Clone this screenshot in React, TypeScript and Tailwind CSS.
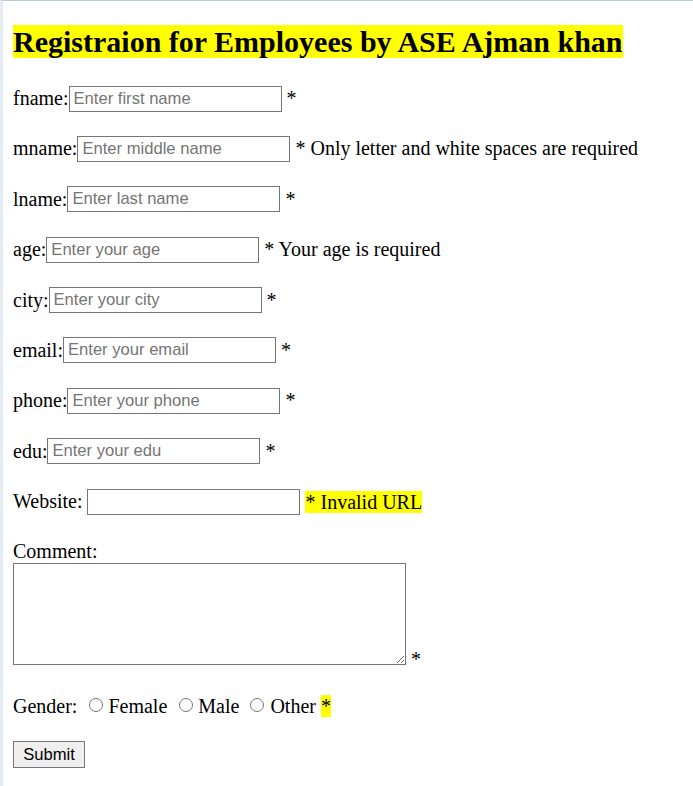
import React from "react";

const fields = [
  { label: "fname:", ph: "Enter first name", note: "*" },
  { label: "mname:", ph: "Enter middle name", note: "* Only letter and white spaces are required" },
  { label: "lname:", ph: "Enter last name", note: "*" },
  { label: "age:", ph: "Enter your age", note: "* Your age is required" },
  { label: "city:", ph: "Enter your city", note: "*" },
  { label: "email:", ph: "Enter your email", note: "*" },
  { label: "phone:", ph: "Enter your phone", note: "*" },
  { label: "edu:", ph: "Enter your edu", note: "*" },
];

const inputCls =
  "w-[213px] h-[26px] border border-[#767676] bg-white pl-[4px] text-[16.6px] text-black placeholder:text-[#757575] outline-none font-['Liberation_Sans',Arial,sans-serif]";

const radioCls =
  "appearance-none m-0 w-[14px] h-[14px] rounded-full border-[1.5px] border-[#767676] bg-white -translate-y-[1px] checked:border-[4px] checked:border-[#0075ff]";

export default function App() {
  return (
    <div className="min-h-screen bg-white border-t border-t-[#bcc8d4] border-l-[3px] border-l-[#e4edf6] text-black text-[20px] leading-[1.15] font-['Liberation_Serif','Times_New_Roman',serif]">
      <div className="pl-[10px] pt-[24px]">
        <h2 className="text-[30px] leading-[1.15] font-bold">
          <span className="bg-[#ffff00]">Registraion for Employees by ASE Ajman khan</span>
        </h2>

        <form className="mt-[26px]" onSubmit={(e) => e.preventDefault()}>
          <div className="flex flex-col gap-[24.4px]">
            {fields.map((f) => (
              <div key={f.label} className="flex items-center h-[26px]">
                <span>{f.label}</span>
                <input type="text" placeholder={f.ph} className={inputCls} />
                <span className="ml-[5px]">{f.note}</span>
              </div>
            ))}
            <div className="flex items-center h-[26px]">
              <span>Website:</span>
              <input type="text" className={inputCls + " ml-[5px]"} />
              <span className="ml-[5px] bg-[#ffff00] leading-[22px]">* Invalid URL</span>
            </div>
          </div>

          <div className="mt-[25px] leading-[23px]">Comment:</div>
          <div className="flex items-end">
            <textarea className="w-[393px] h-[102px] border border-[#767676] bg-white outline-none resize" />
            <span className="ml-[5px] leading-[20px] translate-y-[4px]">*</span>
          </div>

          <div className="mt-[30px] flex items-center h-[23px]">
            <span>Gender:</span>
            <input type="radio" name="gender" className={radioCls + " ml-[12px]"} />
            <span className="ml-[5px]">Female</span>
            <input type="radio" name="gender" className={radioCls + " ml-[12px]"} />
            <span className="ml-[5px]">Male</span>
            <input type="radio" name="gender" className={radioCls + " ml-[11px]"} />
            <span className="ml-[6px]">Other</span>
            <span className="ml-[5px] bg-[#ffff00] leading-[22px]">*</span>
          </div>

          <button
            type="submit"
            className="mt-[23px] w-[72px] h-[27px] border border-[#767676] bg-[#efefef] text-[16.6px] font-['Liberation_Sans',Arial,sans-serif]"
          >
            Submit
          </button>
        </form>
      </div>
    </div>
  );
}
